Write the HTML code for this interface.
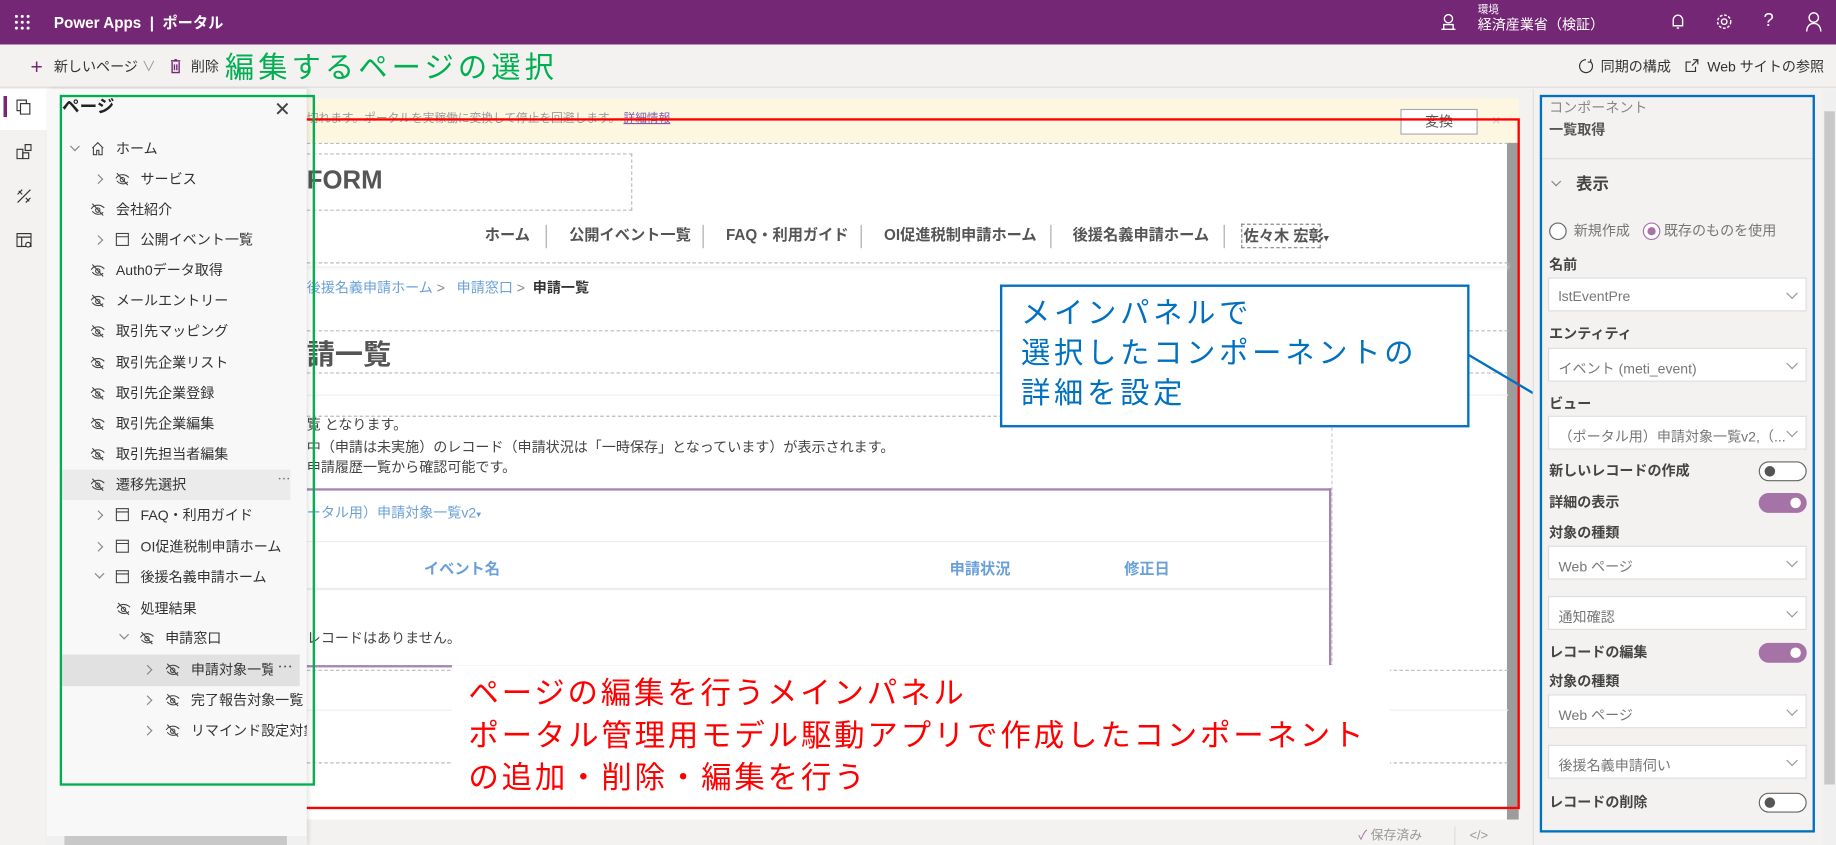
<!DOCTYPE html>
<html><head><meta charset="utf-8">
<style>
*{margin:0;padding:0;box-sizing:border-box}
html,body{width:1836px;height:845px;overflow:hidden;background:#fff}
body{font-family:"Liberation Sans","Noto Sans CJK JP",sans-serif;color:#333}
#w{position:absolute;left:0;top:0;width:1568px;height:722px;transform:scale(1.17092);transform-origin:0 0;overflow:hidden;background:#f3f2f1}
.a{position:absolute;white-space:nowrap;line-height:1}
.t{font-size:12px;color:#333}
.ch{position:absolute;width:6px;height:6px;border-right:1px solid #888;border-bottom:1px solid #888}
.cr{transform:rotate(-45deg)}
.cd{transform:rotate(45deg)}
.dd{position:absolute;left:1322px;width:221px;height:29px;background:#fff;border:1px solid #ddd;font-size:12px;color:#777;padding:8px 0 0 8px;white-space:nowrap;overflow:hidden}
.dd:after{content:"";position:absolute;right:8px;top:9px;width:6px;height:6px;border-right:1px solid #999;border-bottom:1px solid #999;transform:rotate(45deg)}
.lb{position:absolute;left:1323px;font-size:12px;font-weight:bold;color:#444;line-height:1}
.tg{position:absolute;left:1502px;width:41px;height:17px;border-radius:9px;border:1px solid #666;background:#fff}
.tg:after{content:"";position:absolute;left:4px;top:3px;width:9px;height:9px;border-radius:50%;background:#555}
.tg.on{background:#a673a6;border-color:#a673a6}
.tg.on:after{left:auto;right:4px;background:#fff}
.dh{position:absolute;border-top:1px dashed #bbb;height:0}
.nv{font-size:13px;font-weight:bold;color:#555}
.sep{position:absolute;width:1px;height:20px;background:#aaa;top:192px}
</style></head><body><div id="w">

<!-- top bar -->
<div class="a" style="left:0;top:0;width:1568px;height:38px;background:#742774"></div>
<svg class="a" style="left:12px;top:12px" width="14" height="14" viewBox="0 0 14 14" fill="#fff"><circle cx="2" cy="2" r="1.3"/><circle cx="7" cy="2" r="1.3"/><circle cx="12" cy="2" r="1.3"/><circle cx="2" cy="7" r="1.3"/><circle cx="7" cy="7" r="1.3"/><circle cx="12" cy="7" r="1.3"/><circle cx="2" cy="12" r="1.3"/><circle cx="7" cy="12" r="1.3"/><circle cx="12" cy="12" r="1.3"/></svg>
<div class="a" style="left:46px;top:13px;font-size:13px;color:#fff;font-weight:bold">Power Apps&nbsp;&nbsp;|&nbsp;&nbsp;ポータル</div>
<svg class="a" style="left:1230px;top:11px" width="14" height="16" viewBox="0 0 14 16" fill="none" stroke="#fff" stroke-width="1.2"><circle cx="7" cy="5" r="3.5"/><path d="M1 14h12M3 10h8v4H3z"/></svg>
<div class="a" style="left:1262px;top:4px;font-size:9px;color:#fff">環境</div>
<div class="a" style="left:1262px;top:15px;font-size:12px;color:#fff">経済産業省（検証）</div>
<svg class="a" style="left:1427px;top:11px" width="12" height="15" viewBox="0 0 12 15" fill="none" stroke="#fff" stroke-width="1.2"><path d="M2 11V6a4 4 0 018 0v5H2zM5 13h2"/></svg>
<svg class="a" style="left:1465px;top:11px" width="15" height="15" viewBox="0 0 16 16" fill="none" stroke="#fff" stroke-width="1.3"><circle cx="8" cy="8" r="2.5"/><circle cx="8" cy="8" r="6" stroke-dasharray="2.5 1.5"/></svg>
<div class="a" style="left:1506px;top:10px;font-size:16px;color:#fff">?</div>
<svg class="a" style="left:1542px;top:10px" width="14" height="17" viewBox="0 0 14 17" fill="none" stroke="#fff" stroke-width="1.2"><circle cx="7" cy="5" r="4"/><path d="M1 17c0-5 3-7 6-7s6 2 6 7"/></svg>

<!-- toolbar -->
<div class="a" style="left:0;top:38px;width:1568px;height:37px;background:#f3f2f1;border-bottom:1px solid #e1dfdd"></div>
<div class="a" style="left:26px;top:48px;font-size:18px;color:#742774;font-weight:300">+</div>
<div class="a" style="left:46px;top:51px;font-size:12px;color:#333">新しいページ <span style="color:#999">∨</span></div>
<svg class="a" style="left:145px;top:50px" width="10" height="13" viewBox="0 0 10 13" fill="none" stroke="#742774" stroke-width="1.2"><path d="M1 2h8M4 1h2M2 3v9h6V3M4 5v5M6 5v5"/></svg>
<div class="a" style="left:163px;top:51px;font-size:12px;color:#333">削除</div>
<div class="a" style="left:192px;top:46px;font-size:25px;letter-spacing:3.5px;color:#00b050">編集するページの選択</div>
<svg class="a" style="left:1348px;top:50px" width="13" height="13" viewBox="0 0 13 13" fill="none" stroke="#333" stroke-width="1"><path d="M6.5 1a5.5 5.5 0 104 1.7M10.5 0.5v2.5H8"/></svg>
<div class="a" style="left:1367px;top:51px;font-size:12px;color:#333">同期の構成</div>
<svg class="a" style="left:1439px;top:50px" width="12" height="12" viewBox="0 0 12 12" fill="none" stroke="#333" stroke-width="1"><path d="M9 7v4H1V3h4M7 1h4v4M11 1L6 6"/></svg>
<div class="a" style="left:1458px;top:51px;font-size:12px;color:#333">Web サイトの参照</div>

<!-- rail -->
<div class="a" style="left:0;top:76px;width:40px;height:646px;background:#f3f2f1"></div>
<div class="a" style="left:0;top:76px;width:46px;height:35px;background:#fff"></div>
<div class="a" style="left:3px;top:82px;width:3px;height:18px;background:#742774"></div>
<svg class="a" style="left:14px;top:85px" width="12" height="13" viewBox="0 0 12 13" fill="none" stroke="#333"><rect x="0.5" y="0.5" width="8" height="9"/><rect x="3.5" y="3.5" width="8" height="9" fill="#fff"/></svg>
<svg class="a" style="left:14px;top:123px" width="13" height="13" viewBox="0 0 13 13" fill="none" stroke="#333"><rect x="0.5" y="4.5" width="5" height="8"/><rect x="5.5" y="7.5" width="5" height="5"/><rect x="7.5" y="0.5" width="5" height="5"/></svg>
<svg class="a" style="left:14px;top:161px" width="13" height="13" viewBox="0 0 13 13" fill="none" stroke="#333"><path d="M1 12L12 1M2 2l3 3M8 8l3 3M1 5l4-4M8 12l4-4"/></svg>
<svg class="a" style="left:14px;top:199px" width="13" height="13" viewBox="0 0 13 13" fill="none" stroke="#333"><rect x="0.5" y="0.5" width="12" height="11"/><path d="M0.5 3.5h12M4.5 3.5v8"/><circle cx="10" cy="10" r="2" fill="#fff"/></svg>

<!-- canvas area -->
<div class="a" style="left:262px;top:84px;width:1035px;height:38px;background:#fdf7e2"></div>
<div class="a" style="left:262px;top:97px;font-size:10px;color:#999">切れます。ポータルを実稼働に変換して停止を回避します。 <span style="color:#7b5aa6;text-decoration:underline">詳細情報</span></div>
<div class="a" style="left:1196px;top:93px;width:66px;height:22px;background:#fff;border:1px solid #aaa;font-size:12px;color:#555;text-align:center;line-height:20px">変換</div>
<div class="a" style="left:1274px;top:96px;font-size:13px;color:#ccc">×</div>
<div class="a" style="left:262px;top:122px;width:1026px;height:578px;background:#fff"></div>
<div class="a" style="left:1287px;top:122px;width:10px;height:578px;background:#9c9c9c"></div>
<div class="dh" style="left:262px;top:122px;width:1026px"></div>
<div class="a" style="left:262px;top:131px;width:278px;height:49px;border:1px dashed #bbb;border-left:none"></div>
<div class="a" style="left:262px;top:143px;font-size:22px;font-weight:bold;color:#555">FORM</div>
<div class="a nv" style="left:414px;top:194px">ホーム</div>
<div class="sep" style="left:466px"></div>
<div class="a nv" style="left:486px;top:194px">公開イベント一覧</div>
<div class="sep" style="left:600px"></div>
<div class="a nv" style="left:620px;top:194px">FAQ・利用ガイド</div>
<div class="sep" style="left:735px"></div>
<div class="a nv" style="left:755px;top:194px">OI促進税制申請ホーム</div>
<div class="sep" style="left:897px"></div>
<div class="a nv" style="left:916px;top:194px">後援名義申請ホーム</div>
<div class="sep" style="left:1045px"></div>
<div class="a nv" style="left:1060px;top:191px;border:1px dashed #888;padding:3px 1px;width:68px">佐々木 宏彰<span style="font-size:8px">▾</span></div>
<div class="a" style="left:262px;top:224px;width:1026px;height:3px;border-top:1px dashed #bbb;box-shadow:0 2px 3px #eee"></div>
<div class="a" style="left:262px;top:240px;font-size:12px;color:#6aa0d8">後援名義申請ホーム <span style="color:#888">&gt;</span>&nbsp;&nbsp;&nbsp;申請窓口 <span style="color:#888">&gt;</span>&nbsp;&nbsp;<b style="color:#333">申請一覧</b></div>
<div class="dh" style="left:262px;top:282px;width:1026px"></div>
<div class="a" style="left:262px;top:292px;font-size:24px;font-weight:bold;color:#555">請一覧</div>
<div class="dh" style="left:262px;top:318px;width:1026px"></div>
<div class="a" style="left:262px;top:337px;width:1026px;height:1px;background:#eee"></div>
<div class="dh" style="left:262px;top:355px;width:875px"></div>
<div class="a" style="left:1137px;top:355px;height:215px;border-left:1px dashed #ccc"></div>
<div class="a" style="left:262px;top:357px;font-size:12px;color:#444">覧 となります。</div>
<div class="a" style="left:262px;top:376px;font-size:12px;color:#444">中（申請は未実施）のレコード（申請状況は「一時保存」となっています）が表示されます。</div>
<div class="a" style="left:262px;top:393px;font-size:12px;color:#444">申請履歴一覧から確認可能です。</div>
<div class="a" style="left:262px;top:417px;width:875px;height:2px;background:#a884b0"></div>
<div class="a" style="left:1135px;top:417px;width:2px;height:153px;background:#a884b0"></div>
<div class="a" style="left:262px;top:432px;font-size:12px;color:#6aa0d8">ータル用）申請対象一覧v2<span style="font-size:8px">▾</span></div>
<div class="a" style="left:262px;top:462px;width:873px;height:1px;background:#eee"></div>
<div class="a" style="left:362px;top:479px;font-size:13px;font-weight:bold;color:#6aa0d8">イベント名</div>
<div class="a" style="left:811px;top:479px;font-size:13px;font-weight:bold;color:#6aa0d8">申請状況</div>
<div class="a" style="left:960px;top:479px;font-size:13px;font-weight:bold;color:#6aa0d8">修正日</div>
<div class="a" style="left:262px;top:502px;width:873px;height:2px;background:#eee"></div>
<div class="a" style="left:262px;top:539px;font-size:12px;color:#444">レコードはありません。</div>
<div class="a" style="left:262px;top:568px;width:875px;height:2px;background:#a884b0"></div>
<div class="dh" style="left:262px;top:572px;width:1026px"></div>
<div class="a" style="left:262px;top:606px;width:1026px;height:1px;background:#eee"></div>
<div class="dh" style="left:262px;top:651px;width:1026px"></div>
<div class="a" style="left:262px;top:690px;width:1026px;height:1px;background:#eee"></div>
<div class="a" style="left:262px;top:700px;width:1047px;height:22px;background:#f3f2f1"></div>
<div class="a" style="left:1160px;top:709px;font-size:11px;color:#999"><span style="color:#a673a6">✓</span> 保存済み</div>
<div class="a" style="left:1242px;top:706px;width:1px;height:16px;background:#ddd"></div>
<div class="a" style="left:1255px;top:709px;font-size:11px;color:#999">&lt;/&gt;</div>

<!-- red annotation -->
<div class="a" style="left:386px;top:568px;width:801px;height:117px;background:#fff"></div>
<div class="a" style="left:400px;top:574px;font-size:26px;letter-spacing:2.4px;color:#f00;line-height:36px">ページの編集を行うメインパネル<br>ポータル管理用モデル駆動アプリで作成したコンポーネント<br>の追加・削除・編集を行う</div>
<div class="a" style="left:231px;top:101px;width:1067px;height:590px;border:2px solid #f00"></div>

<!-- blue callout -->
<div class="a" style="left:854px;top:243px;width:401px;height:122px;background:#fff;border:2px solid #0070c0"></div>
<div class="a" style="left:872px;top:251px;font-size:25px;letter-spacing:3.2px;color:#0070c0;line-height:34px">メインパネルで<br>選択したコンポーネントの<br>詳細を設定</div>
<svg class="a" style="left:1250px;top:298px" width="90" height="60"><line x1="4" y1="5" x2="80" y2="50" stroke="#0070c0" stroke-width="2"/></svg>

<!-- page panel -->
<div class="a" style="left:40px;top:76px;width:222px;height:646px;background:#f8f8f8;box-shadow:2px 0 4px rgba(0,0,0,.12)"></div>
<div class="a" style="left:53px;top:84px;font-size:15px;font-weight:bold;color:#222">ページ</div>
<div class="a" style="left:234px;top:85px;font-size:17px;color:#444;font-weight:300">✕</div>
<div class="a" style="left:53px;top:401px;width:195px;height:26px;background:#ebebeb"></div>
<div class="a" style="left:237px;top:405px;font-size:11px;color:#777">⋯</div>
<div class="a" style="left:53px;top:559px;width:203px;height:27px;background:#e1e1e1"></div>
<div class="a" style="left:237px;top:563px;font-size:13px;color:#555">⋯</div>

<svg width="0" height="0" style="position:absolute"><defs>
<symbol id="eye" viewBox="0 0 14 14"><g fill="none" stroke="#444" stroke-width="1"><path d="M1 7c2-4 8-5 12-1M2 9c2 3 7 4 10 1"/><circle cx="7" cy="8" r="2"/><path d="M2 2l10 11"/></g></symbol>
<symbol id="pg" viewBox="0 0 14 14"><g fill="none" stroke="#444" stroke-width="1"><rect x="1.5" y="1.5" width="11" height="11"/><path d="M1.5 4.5h11"/></g></symbol>
<symbol id="home" viewBox="0 0 14 14"><g fill="none" stroke="#444" stroke-width="1"><path d="M2 7l5-5 5 5M3 6v7h3V9h2v4h3V6"/></g></symbol>
</defs></svg>

<!-- tree -->
<div class="ch cd" style="left:61px;top:122px"></div><svg class="a" style="left:77px;top:120px" width="13" height="13"><use href="#home"/></svg><div class="a t" style="left:99px;top:121px">ホーム</div>
<div class="ch cr" style="left:81px;top:150px"></div><svg class="a" style="left:98px;top:146px" width="13" height="13"><use href="#eye"/></svg><div class="a t" style="left:120px;top:147px">サービス</div>
<svg class="a" style="left:77px;top:172px" width="13" height="13"><use href="#eye"/></svg><div class="a t" style="left:99px;top:173px">会社紹介</div>
<div class="ch cr" style="left:81px;top:202px"></div><svg class="a" style="left:98px;top:198px" width="13" height="13"><use href="#pg"/></svg><div class="a t" style="left:120px;top:199px">公開イベント一覧</div>
<svg class="a" style="left:77px;top:224px" width="13" height="13"><use href="#eye"/></svg><div class="a t" style="left:99px;top:225px">Auth0データ取得</div>
<svg class="a" style="left:77px;top:250px" width="13" height="13"><use href="#eye"/></svg><div class="a t" style="left:99px;top:251px">メールエントリー</div>
<svg class="a" style="left:77px;top:276px" width="13" height="13"><use href="#eye"/></svg><div class="a t" style="left:99px;top:277px">取引先マッピング</div>
<svg class="a" style="left:77px;top:303px" width="13" height="13"><use href="#eye"/></svg><div class="a t" style="left:99px;top:304px">取引先企業リスト</div>
<svg class="a" style="left:77px;top:329px" width="13" height="13"><use href="#eye"/></svg><div class="a t" style="left:99px;top:330px">取引先企業登録</div>
<svg class="a" style="left:77px;top:355px" width="13" height="13"><use href="#eye"/></svg><div class="a t" style="left:99px;top:356px">取引先企業編集</div>
<svg class="a" style="left:77px;top:381px" width="13" height="13"><use href="#eye"/></svg><div class="a t" style="left:99px;top:382px">取引先担当者編集</div>
<svg class="a" style="left:77px;top:407px" width="13" height="13"><use href="#eye"/></svg><div class="a t" style="left:99px;top:408px">遷移先選択</div>
<div class="ch cr" style="left:81px;top:437px"></div><svg class="a" style="left:98px;top:433px" width="13" height="13"><use href="#pg"/></svg><div class="a t" style="left:120px;top:434px">FAQ・利用ガイド</div>
<div class="ch cr" style="left:81px;top:464px"></div><svg class="a" style="left:98px;top:460px" width="13" height="13"><use href="#pg"/></svg><div class="a t" style="left:120px;top:461px">OI促進税制申請ホーム</div>
<div class="ch cd" style="left:82px;top:487px"></div><svg class="a" style="left:98px;top:486px" width="13" height="13"><use href="#pg"/></svg><div class="a t" style="left:120px;top:487px">後援名義申請ホーム</div>
<svg class="a" style="left:99px;top:513px" width="13" height="13"><use href="#eye"/></svg><div class="a t" style="left:120px;top:514px">処理結果</div>
<div class="ch cd" style="left:103px;top:539px"></div><svg class="a" style="left:119px;top:538px" width="13" height="13"><use href="#eye"/></svg><div class="a t" style="left:141px;top:539px">申請窓口</div>
<div class="ch cr" style="left:123px;top:569px"></div><svg class="a" style="left:141px;top:565px" width="13" height="13"><use href="#eye"/></svg><div class="a t" style="left:163px;top:566px;width:70px;overflow:hidden">申請対象一覧</div>
<div class="ch cr" style="left:123px;top:595px"></div><svg class="a" style="left:141px;top:591px" width="13" height="13"><use href="#eye"/></svg><div class="a t" style="left:163px;top:592px">完了報告対象一覧</div>
<div class="ch cr" style="left:123px;top:621px"></div><svg class="a" style="left:141px;top:617px" width="13" height="13"><use href="#eye"/></svg><div class="a t" style="left:163px;top:618px;width:99px;overflow:hidden">リマインド設定対象</div>
<div class="a" style="left:40px;top:714px;width:222px;height:8px;background:#f0f0f0"></div>
<div class="a" style="left:55px;top:714px;width:190px;height:8px;background:#c8c8c8"></div>
<div class="a" style="left:51px;top:81px;width:218px;height:590px;border:2px solid #00b050"></div>

<!-- right panel -->
<div class="a" style="left:1309px;top:76px;width:259px;height:646px;background:#f3f2f1;border-left:1px solid #e1dfdd"></div>
<div class="a" style="left:1557px;top:76px;width:11px;height:646px;background:#f0f0f0"></div>
<div class="a" style="left:1558px;top:95px;width:9px;height:575px;background:#c8c8c8"></div>
<div class="a" style="left:1323px;top:86px;font-size:12px;color:#888">コンポーネント</div>
<div class="a" style="left:1323px;top:105px;font-size:12px;font-weight:bold;color:#555">一覧取得</div>
<div class="a" style="left:1315px;top:135px;width:234px;height:1px;background:#e1dfdd"></div>
<div class="ch cd" style="left:1326px;top:152px"></div>
<div class="a" style="left:1346px;top:150px;font-size:14px;font-weight:bold;color:#444">表示</div>
<div class="a" style="left:1323px;top:190px;width:15px;height:15px;border:1px solid #666;border-radius:50%;background:#fff"></div>
<div class="a" style="left:1344px;top:191px;font-size:12px;color:#777">新規作成</div>
<div class="a" style="left:1403px;top:190px;width:15px;height:15px;border:1px solid #a673a6;border-radius:50%;background:#fff"></div>
<div class="a" style="left:1407px;top:194px;width:7px;height:7px;border-radius:50%;background:#a673a6"></div>
<div class="a" style="left:1421px;top:191px;font-size:12px;color:#777">既存のものを使用</div>
<div class="lb" style="top:220px">名前</div>
<div class="dd" style="top:237px">lstEventPre</div>
<div class="lb" style="top:279px">エンティティ</div>
<div class="dd" style="top:297px">イベント (meti_event)</div>
<div class="lb" style="top:339px">ビュー</div>
<div class="dd" style="top:355px;padding-right:24px">（ポータル用）申請対象一覧v2,（...</div>
<div class="lb" style="top:396px">新しいレコードの作成</div>
<div class="tg" style="top:394px"></div>
<div class="lb" style="top:423px">詳細の表示</div>
<div class="tg on" style="top:421px"></div>
<div class="lb" style="top:449px">対象の種類</div>
<div class="dd" style="top:466px">Web ページ</div>
<div class="dd" style="top:509px">通知確認</div>
<div class="lb" style="top:551px">レコードの編集</div>
<div class="tg on" style="top:549px"></div>
<div class="lb" style="top:576px">対象の種類</div>
<div class="dd" style="top:593px">Web ページ</div>
<div class="dd" style="top:636px">後援名義申請伺い</div>
<div class="lb" style="top:679px">レコードの削除</div>
<div class="tg" style="top:677px"></div>
<div class="a" style="left:1315px;top:81px;width:235px;height:630px;border:2px solid #0070c0"></div>

</div></body></html>
